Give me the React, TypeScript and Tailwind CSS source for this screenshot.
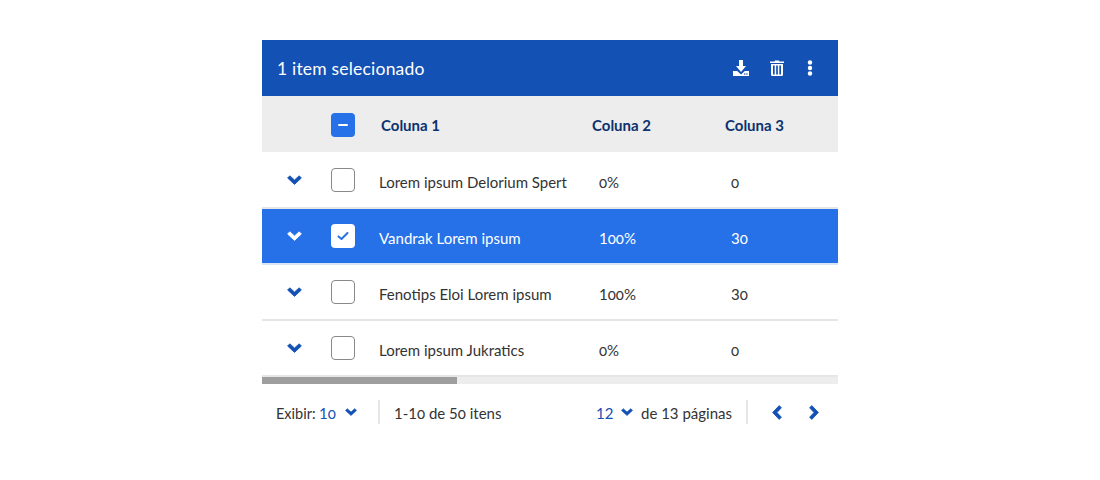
import React from 'react';

const font = "font-['Lato','Noto_Sans',sans-serif]";

// the reference face draws its zero as a small old-style figure, the other digits at full height
const T = ({ children }: { children: string }) => (
  <>
    {children.split(/(0+)/).map((part, i) =>
      /^0+$/.test(part) ? (
        <span key={i} className="oldstyle-nums">
          {part}
        </span>
      ) : (
        part
      ),
    )}
  </>
);

const Chevron = ({ className, w = 15 }: { className: string; w?: number }) => (
  <svg width={w} height={(w * 2) / 3} viewBox="0 0 15 10" className={className}>
    <path d="M0.6 3 L2.8 0.8 L7.5 5 L12.2 0.8 L14.4 3 L7.5 9.4 Z" fill="currentColor" stroke="currentColor" strokeWidth="0.8" strokeLinejoin="round" />
  </svg>
);

const Side = ({ dir }: { dir: 'l' | 'r' }) => (
  <svg width="10" height="15" viewBox="0 0 10 15" className="text-[#1351b4]">
    <path
      d={dir === 'l' ? 'M7.2 0.6 L9.4 2.8 L5 7.5 L9.4 12.2 L7.2 14.4 L0.6 7.5 Z' : 'M2.8 0.6 L0.6 2.8 L5 7.5 L0.6 12.2 L2.8 14.4 L9.4 7.5 Z'}
      fill="currentColor"
      stroke="currentColor"
      strokeWidth="0.8"
      strokeLinejoin="round"
    />
  </svg>
);

const rows = [
  { name: 'Lorem ipsum Delorium Spert', pct: '0%', n: '0' },
  { name: 'Vandrak Lorem ipsum', pct: '100%', n: '30', selected: true },
  { name: 'Fenotips Eloi Lorem ipsum', pct: '100%', n: '30' },
  { name: 'Lorem ipsum Jukratics', pct: '0%', n: '0' },
];

export default function App() {
  return (
    <div className={`w-[1100px] h-[480px] bg-white pt-10 pl-[262px] ${font}`}>
      <div className="w-[576px]">
        <div className="h-14 bg-[#1351b4] flex items-center pl-[15px] text-white">
          <span className="text-[17.5px] tracking-[0.2px] mt-[2px]">1 item selecionado</span>
          <div className="ml-auto flex items-center">
            <svg width="16" height="16" viewBox="0 0 16 16" className="mr-[21px]">
              <path d="M6 0 H10 V6 H13 L8 12 L3 6 H6 Z" fill="white" />
              <path d="M0 11 H4.2 L8 14.5 L11.8 11 H16 V16 H0 Z" fill="white" />
              <rect x="11" y="13.4" width="1.4" height="1.2" fill="#1351b4" />
              <rect x="13.2" y="13.4" width="1.4" height="1.2" fill="#1351b4" />
            </svg>
            <svg width="14" height="16" viewBox="0 0 14 16" className="mr-[23px]">
              <path d="M0 1.5 H4.5 L5 0.4 H9 L9.5 1.5 H14 V3 H0 Z" fill="white" />
              <path
                fillRule="evenodd"
                d="M1 4 H13 V14.5 Q13 16 11.5 16 H2.5 Q1 16 1 14.5 Z M3 5.5 V14.5 H4.7 V5.5 Z M6.15 5.5 V14.5 H7.85 V5.5 Z M9.3 5.5 V14.5 H11 V5.5 Z"
                fill="white"
              />
            </svg>
            <svg width="6" height="16" viewBox="0 0 6 16" className="mr-[25px]">
              <circle cx="3" cy="2.5" r="2.2" fill="white" />
              <circle cx="3" cy="8" r="2.2" fill="white" />
              <circle cx="3" cy="13.5" r="2.2" fill="white" />
            </svg>
          </div>
        </div>

        <div className="h-14 bg-[#ededed] flex items-center text-[15px] font-bold text-[#0c326f]">
          <div className="w-[69px]" />
          <div className="w-[24px] h-[24px] rounded-[4px] bg-[#2670e8] flex items-center justify-center mt-[2px]">
            <div className="w-[10px] h-[2px] bg-white rounded-sm" />
          </div>
          <div className="ml-[26px] w-[211px] mt-[3px]">Coluna 1</div>
          <div className="w-[133px] mt-[3px]">Coluna 2</div>
          <div className="mt-[3px]">Coluna 3</div>
        </div>

        {rows.map((r, i) => (
          <div
            key={r.name}
            className={`flex items-center text-[15px] border-b-2 ${i === 0 ? 'h-[57px] pt-[1px]' : 'h-14'} ${
              r.selected ? 'bg-[#2670e8] text-white border-[#d9e4f5]' : 'bg-white text-[#333333] border-[#e6e6e6]'
            }`}
          >
            <div className="w-[69px] pl-[25px] flex items-center">
              <Chevron className={r.selected ? 'text-white' : 'text-[#1351b4]'} />
            </div>
            {r.selected ? (
              <div className="w-[24px] h-[24px] rounded-[4px] bg-white flex items-center justify-center">
                <svg width="12" height="10" viewBox="0 0 12 10">
                  <path d="M1.5 5.5 L4.5 8 L10.5 2" fill="none" stroke="#2670e8" strokeWidth="2" strokeLinecap="round" strokeLinejoin="round" />
                </svg>
              </div>
            ) : (
              <div className="w-[24px] h-[24px] rounded-[4px] bg-white border border-[#888888]" />
            )}
            <div className="ml-6 w-[220px] mt-[4px]">{r.name}</div>
            <div className="w-[132px] mt-[4px]">
              <T>{r.pct}</T>
            </div>
            <div className="mt-[4px]">
              <T>{r.n}</T>
            </div>
          </div>
        ))}

        <div className="h-[7px] bg-[#ededed]">
          <div className="h-[7px] w-[195px] bg-[#9e9e9e]" />
        </div>

        <div className="h-14 flex items-center text-[15px] text-[#333333]">
          <span className="ml-[14px] w-[43px] text-[14.5px] mt-[3px]">Exibir:</span>
          <span className="w-[26px] mt-[3px] text-[#1351b4]">
            <T>10</T>
          </span>
          <Chevron className="-mt-[1px] text-[#1351b4]" w={12} />
          <div className="ml-[21px] w-[2px] h-6 bg-[#e6e6e6]" />
          <span className="ml-[14px] w-[202px] mt-[3px]">
            <T>1-10 de 50 itens</T>
          </span>
          <span className="w-[25px] mt-[3px] text-[#1351b4]">12</span>
          <Chevron className="-mt-[1px] text-[#1351b4]" w={12} />
          <span className="ml-[8px] w-[105px] whitespace-nowrap mt-[3px]">de 13 páginas</span>
          <div className="w-[2px] h-6 bg-[#e6e6e6]" />
          <div className="ml-[24px] flex items-center gap-[27px]">
            <Side dir="l" />
            <Side dir="r" />
          </div>
        </div>
      </div>
    </div>
  );
}
